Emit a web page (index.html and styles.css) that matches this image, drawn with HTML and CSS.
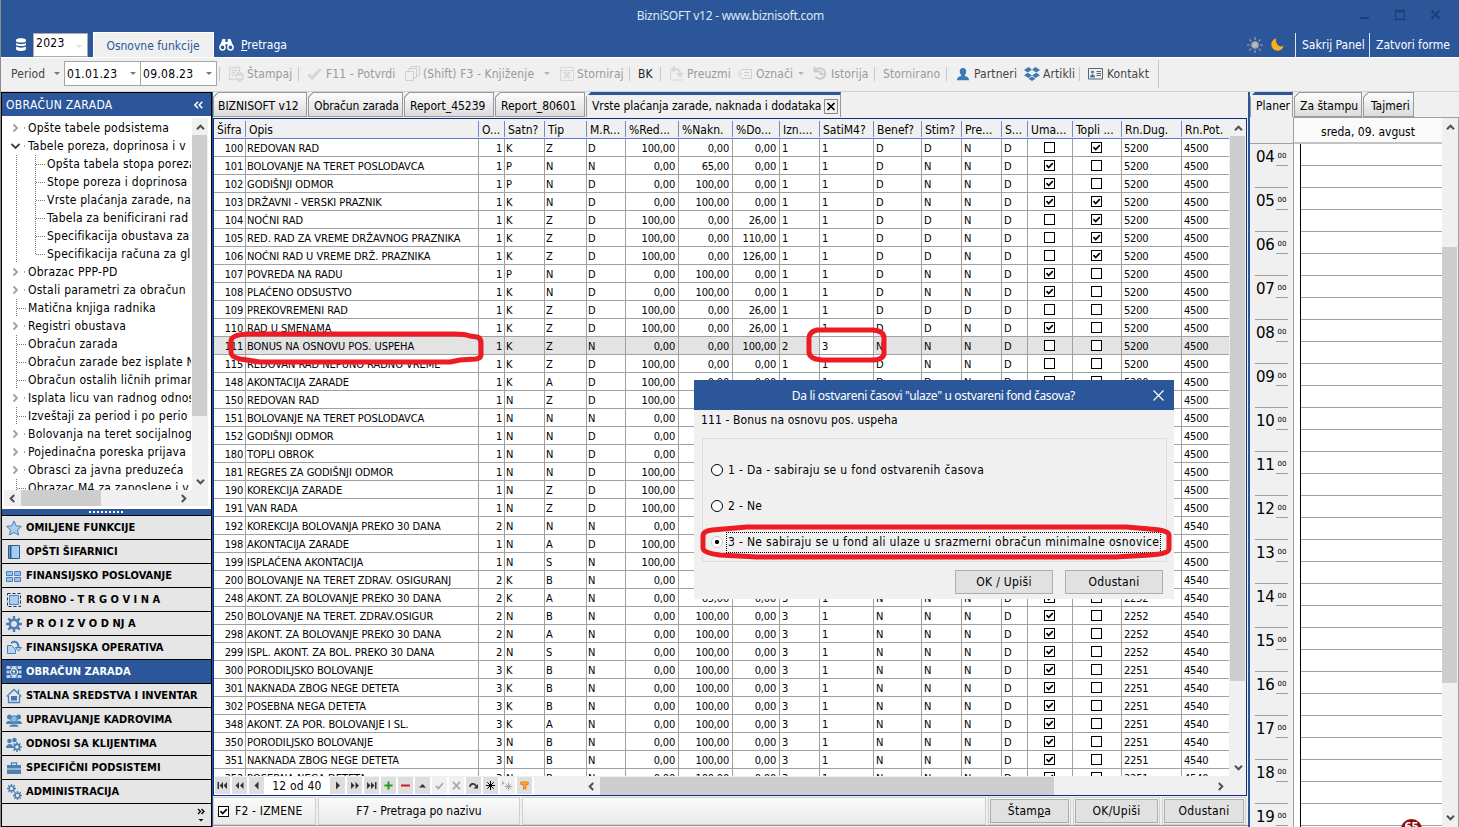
FILE: index.html
```html
<!DOCTYPE html>
<html lang="sr-Latn">
<head>
  <meta charset="UTF-8">
  <title>BizniSOFT v12 - www.biznisoft.com</title>
  <link rel="stylesheet" href="styles.css">
</head>
<body>
  <svg class="defs" width="0" height="0">
    <symbol id="up" viewBox="0 0 9 9"><path d="M1 6.2 4.5 2.7 8 6.2" fill="none" stroke="#505050" stroke-width="2"/></symbol>
    <symbol id="down" viewBox="0 0 9 9"><path d="M1 2.8 4.5 6.3 8 2.8" fill="none" stroke="#505050" stroke-width="2"/></symbol>
    <symbol id="left" viewBox="0 0 9 9"><path d="M6.2 1 2.7 4.5 6.2 8" fill="none" stroke="#505050" stroke-width="2"/></symbol>
    <symbol id="right" viewBox="0 0 9 9"><path d="M2.8 1 6.3 4.5 2.8 8" fill="none" stroke="#505050" stroke-width="2"/></symbol>
    <symbol id="gear" viewBox="0 0 16 16">
      <path d="M8 0v16M0 8h16M2.3 2.3l11.4 11.4M13.7 2.3 2.3 13.7" stroke="#4a80b5" stroke-width="2.4"/>
      <circle cx="8" cy="8" r="4.2" fill="#e6e6e6" stroke="#4a80b5" stroke-width="2.6"/>
    </symbol>
    <symbol id="person" viewBox="0 0 16 16">
      <path d="M8 1c2.500 0 3.800 1.800 3.700 4 0 1.700-.8 2.900-1.500 3.800v1.400c2.500.7 4.600 1.500 4.800 4.800H1c.2-3.300 2.300-4.100 4.800-4.800V8.800C5.100 7.900 4.300 6.700 4.300 5 4.200 2.800 5.500 1 8 1z"/>
    </symbol>
  </svg>

  <header class="titlebar">
    <div class="caption">
      <span class="app-title">BizniSOFT v12 - www.biznisoft.com</span>
      <svg class="win-buttons" width="84" height="12" viewBox="0 0 84 12" fill="none" stroke="#1b3f78">
        <path d="M1 9h9" stroke-width="2"/>
        <path d="M36.500 1.500h9v9h-9zM36 2.500h10" stroke-width="1.300"/>
        <path d="M72.500 1.500l8 8M80.500 1.500l-8 8" stroke-width="2.200"/>
      </svg>
    </div>
    <div class="ribbon">
      <svg class="db" width="12" height="13" viewBox="0 0 12 13" fill="#fff">
        <path d="M1 2c0-2.500 10-2.500 10 0v1c0 2-10 2-10 0z"/>
        <path d="M1 5c2 1.500 8 1.500 10 0v1.500c0 2-10 2-10 0z"/>
        <path d="M1 8.500c2 1.500 8 1.500 10 0V11c0 2.500-10 2.500-10 0z"/>
      </svg>
      <div class="year"><span>2023</span><i class="caret light"></i></div>
      <div class="ribbon-tab">Osnovne funkcije</div>
      <div class="search">
        <svg width="15" height="13" viewBox="0 0 15 13">
          <path d="M3.500 1h2.800v3h2.400V1h2.800L14.500 9H9V6.500H6V9H.5z" fill="#fff"/>
          <circle cx="3.500" cy="9.300" r="2.600" fill="#2b579a" stroke="#fff" stroke-width="1.500"/>
          <circle cx="11.500" cy="9.300" r="2.600" fill="#2b579a" stroke="#fff" stroke-width="1.500"/>
        </svg>
        <span><u>P</u>retraga</span>
      </div>
      <svg class="sun" width="16" height="16" viewBox="0 0 16 16" stroke="#a3a5a8" stroke-width="1.200">
        <path d="M8 0v3M8 13v3M0 8h3M13 8h3M2.300 2.300l2 2M11.700 11.700l2 2M13.700 2.300l-2 2M4.300 11.700l-2 2"/>
        <circle cx="8" cy="8" r="3.200" fill="#b9b9b9"/>
      </svg>
      <svg class="moon" width="13" height="13" viewBox="0 0 13 13"><path d="M5.200.5A6.200 6.200 0 1 0 12.600 7.600C9.500 10.200 3.800 6.500 5.200.5z" fill="#fcae1a"/></svg>
      <div class="link hide-panel">Sakrij Panel</div>
      <div class="link close-forms">Zatvori forme</div>
    </div>
  </header>

  <div class="toolbar">
    <span class="dark">Period</span>
    <i class="caret"></i>
    <div class="date"><span>01.01.23</span><i class="caret"></i></div>
    <div class="date"><span>09.08.23</span><i class="caret"></i></div>
    <i class="sep"></i>
    <svg width="16" height="16" viewBox="0 0 16 16" fill="none" stroke="#d6d6d6" stroke-width="1.300"><path d="M7 13.500H1.500v-12h10V6M3.500 4.500h6M3.500 7h4M3.500 9.500h3M8 9h7v4H8zM10 13v2h3v-2M9.500 9V7h4v2"/></svg>
    <span>Štampaj</span>
    <i class="sep"></i>
    <svg width="15" height="14" viewBox="0 0 15 14" fill="none" stroke="#d6d6d6" stroke-width="3"><path d="M1.500 7.500 5 11l8.500-9"/></svg>
    <span>F11 - Potvrdi</span>
    <svg width="15" height="15" viewBox="0 0 15 15" fill="#f0f0f0" stroke="#d0d0d0"><path d="M5.500.5h9v9h-9z"/><path d="M3.500 2.500h8v9h-8z"/><path d="M.5 5.500h8v9h-8z"/></svg>
    <span>(Shift) F3 - Knjiženje</span>
    <i class="caret pale"></i>
    <svg width="14" height="14" viewBox="0 0 14 14" fill="none" stroke="#d8d8d8"><path d="M.5.500h13v13H.5zM.5 3.500h13"/><path d="M4 5l6 6M10 5l-6 6" stroke-width="2"/></svg>
    <span>Storniraj</span>
    <i class="sep"></i>
    <span class="black">BK</span>
    <i class="sep"></i>
    <svg width="15" height="15" viewBox="0 0 15 15" fill="none" stroke="#d8d8d8"><path d="M1.500 4v10H14"/><path d="M3 3h4q4 0 4 5" stroke-width="2"/><path d="M7.500 7.500h7L11 11.500z" fill="#d8d8d8"/><path d="M5.500 0v6L1.500 3z" fill="#d8d8d8"/></svg>
    <span>Preuzmi</span>
    <svg width="16" height="12" viewBox="0 0 16 12" fill="none" stroke="#cfcfcf"><path d="M4.500 1.500h10v9h-10L.8 6z"/><path d="M7 4.500h5M7 7.500h5"/><circle cx="4" cy="6" r=".6"/></svg>
    <span>Označi</span>
    <i class="caret pale"></i>
    <svg width="14" height="13" viewBox="0 0 14 13" fill="none" stroke="#cacaca" stroke-width="2"><path d="M2.500 3.500a5.300 5.300 0 1 1 0 6M1.500 0v4.500H6M7.500 3.500v3.500h3"/></svg>
    <span>Istorija</span>
    <i class="sep"></i>
    <span>Stornirano</span>
    <i class="sep"></i>
    <svg width="14" height="14" viewBox="0 0 16 16" fill="#3d79b5"><use href="#person"/></svg>
    <span class="dark">Partneri</span>
    <svg width="16" height="14" viewBox="0 0 16 14" fill="#3d79b5"><path d="M4.500 0 8 2.700 3.700 5.500 0 3zM11.500 0 16 3l-3.700 2.500L8 2.700zM3.700 5.700 8 8.500 4.500 11 0 8.300zM12.300 5.700 16 8.300 11.500 11 8 8.500zM4.500 11.800 8 9.400l3.500 2.400L8 14z"/></svg>
    <span class="dark">Artikli</span>
    <i class="sep"></i>
    <svg width="15" height="12" viewBox="0 0 15 12" fill="none" stroke="#5f6367"><path d="M.5.500h14v10.500H.5z"/><path d="M2.500 9c0-3 4-3 4 0z" fill="#3d79b5" stroke="#3d79b5"/><circle cx="4.500" cy="4" r="1" fill="#3d79b5" stroke="#3d79b5"/><path d="M8.500 3.500H13M8.500 5.500H13M8.500 7.500H13"/></svg>
    <span class="dark">Kontakt</span>
    <i class="sep tall"></i>
  </div>

  <main class="workspace">
    <aside class="sidebar">
      <div class="side-head"><span>OBRAČUN ZARADA</span>
        <svg width="9" height="8" viewBox="0 0 9 8" fill="none" stroke="#fff" stroke-width="1.500"><path d="M4 .7.900 4 4 7.300M8.300.700 5.200 4l3.100 3.300"/></svg>
      </div>
      <div class="tree-area">
        <ul class="tree">
          <li class="parent">Opšte tabele podsistema</li>
          <li class="parent open">Tabele poreza, doprinosa i v</li>
          <li class="child">Opšta tabela stopa poreza</li>
          <li class="child">Stope poreza i doprinosa</li>
          <li class="child">Vrste plaćanja zarade, na</li>
          <li class="child">Tabela za benificirani rad</li>
          <li class="child">Specifikacija obustava za</li>
          <li class="child last">Specifikacija računa za gl</li>
          <li class="parent">Obrazac PPP-PD</li>
          <li class="parent">Ostali parametri za obračun</li>
          <li class="leaf">Matična knjiga radnika</li>
          <li class="parent">Registri obustava</li>
          <li class="leaf">Obračun zarada</li>
          <li class="leaf">Obračun zarade bez isplate N</li>
          <li class="leaf">Obračun ostalih ličnih primar</li>
          <li class="parent">Isplata licu van radnog odnos</li>
          <li class="leaf">Izveštaji za period i po perio</li>
          <li class="parent">Bolovanja na teret socijalnog</li>
          <li class="parent">Pojedinačna poreska prijava</li>
          <li class="parent">Obrasci za javna preduzeća</li>
          <li class="leaf">Obrazac M4 za zaposlene i v</li>
        </ul>
        <div class="vscroll tree-v">
          <svg width="9" height="9"><use href="#up"/></svg>
          <i class="thumb"></i>
          <svg width="9" height="9"><use href="#down"/></svg>
        </div>
      </div>
      <div class="hscroll tree-h">
        <svg width="9" height="9"><use href="#left"/></svg>
        <i class="thumb"></i>
        <svg width="9" height="9"><use href="#right"/></svg>
      </div>
      <div class="splitter"><i></i></div>
      <nav class="modules">
        <a><svg width="16" height="16" viewBox="0 0 16 16"><path d="M8 1l2.200 4.800 5.100.6-3.800 3.500 1.100 5.100L8 12.500 3.400 15l1.100-5.100L.7 6.400l5.100-.6z" fill="#a9cdee" stroke="#4a80b5"/></svg>OMILJENE FUNKCIJE</a>
        <a><svg width="16" height="16" viewBox="0 0 16 16"><path d="M2.500 1.500h11v13h-11z" fill="#a9cdf2" stroke="#2f5d8f"/><path d="M4.500 1.500v13" stroke="#2f5d8f" stroke-width="2"/></svg>OPŠTI ŠIFARNICI</a>
        <a><svg width="16" height="16" viewBox="0 0 16 16" fill="#9cc3ec" stroke="#4a80b5"><path d="M.5 3.500h6v4h-6zM8.500 3.500h6v4h-6zM.5 9.500h6v4h-6zM8.500 9.500h6v4h-6z"/></svg>FINANSIJSKO POSLOVANJE</a>
        <a><svg width="16" height="16" viewBox="0 0 16 16"><path d="M3.500 3.500h9v9h-9z" fill="#a9cdf2" stroke="#4a80d0"/><path d="M1.500 1.500h13v13h-13z" fill="none" stroke="#1d2f48" stroke-dasharray="3 2"/></svg>ROBNO - T R G O V I N A</a>
        <a><svg width="16" height="16"><use href="#gear"/></svg>P R O I Z V O D NJ A</a>
        <a><svg width="16" height="16" viewBox="0 0 16 16"><path d="M1.500 5.500h4l4 4v4h-8z" fill="#b6d5f3" stroke="#4a80b5"/><path d="M5 3c5-3 7.500 0 7.500 5" fill="none" stroke="#4a80b5" stroke-width="2"/><path d="M9.500 7.500h6L12.500 11z" fill="#b6d5f3" stroke="#4a80b5"/></svg>FINANSIJSKA OPERATIVA</a>
        <a class="active"><svg width="16" height="16" viewBox="0 0 16 16"><path d="M.5 2h15v3H.5zM.5 6.500h3v3h-3zM12.500 6.500h3v3h-3zM.5 11h15v3H.5z" fill="#b9d3ee"/><path d="M5 2v3M11 2v3M5 11v3M11 11v3" stroke="#2b579a"/><circle cx="8" cy="8" r="3.500" fill="#3a6cab" stroke="#fff"/><path d="M8 6v4M6.500 7.500H9" stroke="#fff"/></svg>OBRAČUN ZARADA</a>
        <a><svg width="16" height="16" viewBox="0 0 16 16"><path d="M2.500 8v6.500h11V8M.7 8.500 8 1.500l7.300 7M12.500 5V1.500" fill="none" stroke="#4a80b5" stroke-width="1.300"/><path d="M5 8h6v4.500H5z" fill="#3d79b5"/></svg>STALNA SREDSTVA I INVENTAR</a>
        <a><svg width="16" height="16" viewBox="0 0 16 16" fill="#4a80b5"><circle cx="3.500" cy="5" r="2.500"/><circle cx="12.500" cy="5" r="2.500"/><path d="M0 12c0-4 5-4 5-2h6c0-2 5-2 5 2z"/><circle cx="8" cy="7" r="3.300" fill="#8fb8e0" stroke="#4a80b5"/><path d="M3 15c0-4 10-4 10 0z" stroke="#e6e6e6" stroke-width=".5"/></svg>UPRAVLJANJE KADROVIMA</a>
        <a><svg width="16" height="16" viewBox="0 0 16 16" fill="#4a80b5"><circle cx="3.500" cy="5" r="2.300"/><circle cx="8.500" cy="4" r="2.300"/><path d="M0 12c0-5 7-5 7-1v1z"/><svg x="6" y="6" width="10" height="10"><use href="#gear"/></svg></svg>ODNOSI SA KLIJENTIMA</a>
        <a><svg width="16" height="16" viewBox="0 0 16 16"><path d="M1 5h14v3.500H1zM1 9.500h14V14H1z" fill="#4a80b5"/><path d="M5.500 5V2.800h5V5" fill="none" stroke="#4a80b5" stroke-width="1.300"/></svg>SPECIFIČNI PODSISTEMI</a>
        <a><svg width="16" height="16" viewBox="0 0 16 16"><svg x="1" y="0" width="9" height="9"><use href="#gear"/></svg><svg x="7" y="7" width="9" height="9"><use href="#gear"/></svg></svg>ADMINISTRACIJA</a>
      </nav>
      <div class="side-foot">
        <svg width="8" height="16" viewBox="0 0 8 16" fill="none" stroke="#000" stroke-width="1.300"><path d="M1 1l2.500 2.500L1 6M4.500 1 7 3.500 4.500 6"/><path d="M1.500 11h5L4 13.500z" fill="#000" stroke="none"/></svg>
      </div>
    </aside>

    <section class="center">
      <div class="tabs">
        <div class="tab t1">BIZNISOFT v12</div>
        <div class="tab t2">Obračun zarada</div>
        <div class="tab t3">Report_45239</div>
        <div class="tab t4">Report_80601</div>
        <div class="tab t5 current">Vrste plaćanja zarade, naknada i dodataka
          <svg width="14" height="15" viewBox="0 0 14 15" fill="none"><path d="M.5.500h13v14H.5z" stroke="#888"/><path d="M3.500 4l7 7M10.500 4l-7 7" stroke="#000" stroke-width="1.700"/></svg>
        </div>
      </div>
      <div class="grid-frame">
        <div class="grid-body">
          <div class="grid-view">
            <div class="row head">
              <span>Šifra</span><span>Opis</span><span>O...</span><span>Satn?</span><span>Tip</span><span>M.R...</span><span>%Red...</span><span>%Nakn.</span><span>%Do...</span><span>Izn....</span><span>SatiM4?</span><span>Benef?</span><span>Stim?</span><span>Pre...</span><span>S...</span><span>Uma...</span><span>Topli ...</span><span>Rn.Dug.</span><span>Rn.Pot.</span>
            </div>
            <div id="rows"></div>
          </div>
          <div class="vscroll grid-v">
            <svg width="9" height="9"><use href="#up"/></svg>
            <i class="thumb"></i>
            <svg width="9" height="9"><use href="#down"/></svg>
          </div>
        </div>
        <div class="grid-nav">
          <b><svg width="11" height="9" viewBox="0 0 11 9"><path d="M.5 1H2v7H.5zM6 1v7L2.500 4.500zM10 1v7L6.500 4.500z"/></svg></b>
          <b><svg width="11" height="9" viewBox="0 0 11 9"><path d="M5 1v7L1.500 4.500zM9.500 1v7L6 4.500z"/></svg></b>
          <b><svg width="11" height="9" viewBox="0 0 11 9"><path d="M7.500.500v8l-4-4z"/></svg></b>
          <span>12 od 40</span>
          <b><svg width="11" height="9" viewBox="0 0 11 9"><path d="M4 .5v8l4-4z"/></svg></b>
          <b><svg width="11" height="9" viewBox="0 0 11 9"><path d="M2 1v7l3.500-3.500zM6.500 1v7L10 4.500z"/></svg></b>
          <b><svg width="11" height="9" viewBox="0 0 11 9"><path d="M1 1v7l3.500-3.500zM5 1v7l3.500-3.500zM9 1h1.500v7H9z"/></svg></b>
          <b><svg width="9" height="9" viewBox="0 0 9 9"><path d="M4.500.500v8M.5 4.500h8" stroke="#1fa01f" stroke-width="2"/></svg></b>
          <b><svg width="9" height="9" viewBox="0 0 9 9"><path d="M0 4.500h9" stroke="#d01c1c" stroke-width="2"/></svg></b>
          <b><svg width="9" height="9" viewBox="0 0 9 9"><path d="M1 6.500h7L4.500 3z"/></svg></b>
          <b class="off"><svg width="9" height="9" viewBox="0 0 9 9"><path d="M1 5l2.500 2.500L8 2" fill="none" stroke="#aaa" stroke-width="1.800"/></svg></b>
          <b class="off"><svg width="9" height="9" viewBox="0 0 9 9"><path d="M1 .8l7 7.500M8 .8 1 8.300" stroke="#aaa" stroke-width="1.800"/></svg></b>
          <b><svg width="9" height="9" viewBox="0 0 9 9"><path d="M1 6c0-4 5-4 6-1" fill="none" stroke="#333" stroke-width="1.600"/><path d="M9 3v4.500H4.500z"/></svg></b>
          <b><svg width="9" height="9" viewBox="0 0 9 9"><path d="M4.500 0v9M0 4.500h9M1.300 1.300l6.400 6.400M7.700 1.300 1.300 7.700" stroke="#000"/></svg></b>
          <b class="off"><svg width="11" height="10" viewBox="0 0 11 10"><path d="M0 0v4l2.500-2z" fill="#aaa"/><path d="M6.500 1.500v8M2.500 5.500h8M3.700 2.700l5.600 5.600M9.300 2.700 3.700 8.300" stroke="#aaa"/></svg></b>
          <b><svg width="9" height="9" viewBox="0 0 9 9"><path d="M.8 1h7.400v2.500H6V8H3.500V3.500H.8z" fill="#ffa53a" stroke="#ef7d0b"/></svg></b>
          <div class="hscroll grid-h">
            <svg width="9" height="9"><use href="#left"/></svg>
            <i class="thumb"></i>
            <svg width="9" height="9"><use href="#right"/></svg>
          </div>
        </div>
      </div>
      <footer class="form-bar">
        <div class="cell c1"><i class="check on"></i>F2 - IZMENE</div>
        <div class="cell c2">F7 - Pretraga po nazivu</div>
        <div class="cell c3"></div>
        <div class="cell btn c4"><button>Štam<u>p</u>a</button></div>
        <div class="cell btn c5"><button>OK/Upiši</button></div>
        <div class="cell btn c6"><button>Odustani</button></div>
      </footer>
    </section>

    <aside class="planner">
      <div class="tabs">
        <div class="tab p1 current">Planer</div>
        <div class="tab p2">Za štampu</div>
        <div class="tab p3">Tajmeri</div>
      </div>
      <div class="day">
        <div class="hours" id="hours"></div>
        <div class="slots">
          <div class="day-name">sreda, 09. avgust</div>
          <div class="lines"></div>
        </div>
        <div class="vscroll day-v">
          <svg width="9" height="9"><use href="#up"/></svg>
          <i class="thumb"></i>
          <svg width="9" height="9"><use href="#down"/></svg>
        </div>
      </div>
      <div class="badge">65</div>
    </aside>
  </main>

  <div class="dialog">
    <div class="dialog-title"><span>Da li ostvareni časovi "ulaze" u ostvareni fond časova?</span>
      <svg width="11" height="11" viewBox="0 0 11 11"><path d="M.5.500l10 10M10.500.500l-10 10" stroke="#fff" stroke-width="1.100"/></svg>
    </div>
    <p>111 - Bonus na osnovu pos. uspeha</p>
    <div class="options">
      <label><i class="radio"></i><span>1 - Da - sabiraju se u fond ostvarenih časova</span></label>
      <label><i class="radio"></i><span>2 - Ne</span></label>
      <label class="picked"><i class="radio"></i><span>3 - Ne sabiraju se u fond ali ulaze u srazmerni obračun minimalne osnovice</span></label>
    </div>
    <div class="actions"><button>OK / Upiši</button><button>Odustani</button></div>
  </div>

  <!-- hand drawn highlights -->
  <svg class="marks" width="1459" height="827" fill="none" stroke="#ed1c24" stroke-width="5" stroke-linejoin="round">
    <path d="M247 334H455Q465 334 470 336L477 337Q481 338 481 343V355Q481 358 476 359L460 360 450 362H260L240 359Q231 357 231 352V341Q231 335 247 334z"/>
    <path d="M817 330H873Q884 331 884 338V353Q884 359 874 360H822Q809 359 809 352V338Q809 332 817 330z"/>
    <path d="M747 527H1126L1150 529Q1169 530 1169 535V549Q1169 554 1150 555L1115 557H757L720 555Q703 553 703 548V536Q703 531 712 530z"/>
  </svg>

  <script src="app.js"></script>
</body>
</html>
```
FILE: app.js
```js
// sifra|opis|o|satn|tip|mr|red|nakn|do|izn|sati|benef|stim|pre|s|uma|topli|dug|pot
const data = `100|REDOVAN RAD|1|K|Z|D|100,00|0,00|0,00|1|1|D|D|N|D|0|1|5200|4500
101|BOLOVANJE NA TERET POSLODAVCA|1|P|N|N|0,00|65,00|0,00|1|1|D|N|N|D|1|0|5200|4500
102|GODIŠNJI ODMOR|1|P|N|D|0,00|100,00|0,00|1|1|D|N|N|D|1|0|5200|4500
103|DRŽAVNI - VERSKI PRAZNIK|1|K|N|D|0,00|100,00|0,00|1|1|D|N|N|D|1|1|5200|4500
104|NOĆNI RAD|1|K|Z|D|100,00|0,00|26,00|1|1|D|D|N|D|0|1|5200|4500
105|RED. RAD ZA VREME DRŽAVNOG PRAZNIKA|1|K|Z|D|100,00|0,00|110,00|1|1|D|D|N|D|0|1|5200|4500
106|NOĆNI RAD U VREME DRŽ. PRAZNIKA|1|K|Z|D|100,00|0,00|126,00|1|1|D|D|N|D|0|1|5200|4500
107|POVREDA NA RADU|1|P|N|D|0,00|100,00|0,00|1|1|D|N|N|D|1|0|5200|4500
108|PLAĆENO ODSUSTVO|1|K|N|D|0,00|100,00|0,00|1|1|D|N|N|D|1|0|5200|4500
109|PREKOVREMENI RAD|1|K|Z|D|100,00|0,00|26,00|1|1|D|D|D|D|0|0|5200|4500
110|RAD U SMENAMA|1|K|Z|D|100,00|0,00|26,00|1|1|D|D|N|D|1|0|5200|4500
111|BONUS NA OSNOVU POS. USPEHA|1|K|Z|N|0,00|0,00|100,00|2|3|N|N|N|D|0|0|5200|4500
115|REDOVAN RAD NEPUNO RADNO VREME|1|K|Z|D|100,00|0,00|0,00|1|1|D|N|N|D|0|0|5200|4500
148|AKONTACIJA ZARADE|1|K|A|D|100,00|0,00|0,00|1|1|D|D|N|D|0|0|5200|4500
150|REDOVAN RAD|1|N|Z|D|100,00|0,00|0,00|1|1|D|D|N|D|0|0|5200|4500
151|BOLOVANJE NA TERET POSLODAVCA|1|N|N|N|0,00|65,00|0,00|1|1|D|N|N|D|1|0|5200|4500
152|GODIŠNJI ODMOR|1|N|N|D|0,00|100,00|0,00|1|1|D|N|N|D|1|0|5200|4500
180|TOPLI OBROK|1|N|N|D|0,00|0,00|0,00|1|1|D|N|N|D|0|0|5200|4500
181|REGRES ZA GODIŠNJI ODMOR|1|N|N|D|100,00|0,00|0,00|1|1|D|N|N|D|0|0|5200|4500
190|KOREKCIJA ZARADE|1|N|Z|D|100,00|0,00|0,00|1|1|D|N|N|D|0|0|5200|4500
191|VAN RADA|1|N|Z|D|100,00|0,00|0,00|1|1|D|N|N|D|0|0|5200|4500
192|KOREKCIJA BOLOVANJA PREKO 30 DANA|2|N|N|N|0,00|65,00|0,00|3|1|N|N|N|D|1|0|2252|4540
198|AKONTACIJA ZARADE|1|N|A|D|100,00|0,00|0,00|1|1|D|N|N|D|0|0|5200|4500
199|ISPLAĆENA AKONTACIJA|1|N|S|N|100,00|0,00|0,00|1|1|D|N|N|D|0|0|5200|4500
200|BOLOVANJE NA TERET ZDRAV. OSIGURANJ|2|K|B|N|0,00|65,00|0,00|3|1|N|N|N|D|1|0|2252|4540
248|AKONT. ZA BOLOVANJE PREKO 30 DANA|2|K|A|N|0,00|65,00|0,00|3|1|N|N|N|D|1|0|2252|4540
250|BOLOVANJE NA TERET. ZDRAV.OSIGUR|2|N|B|N|0,00|100,00|0,00|3|1|N|N|N|D|1|0|2252|4540
298|AKONT. ZA BOLOVANJE PREKO 30 DANA|2|N|A|N|0,00|100,00|0,00|3|1|N|N|N|D|1|0|2252|4540
299|ISPL. AKONT. ZA BOL. PREKO 30 DANA|2|N|S|N|0,00|100,00|0,00|3|1|N|N|N|D|1|0|2252|4540
300|PORODILJSKO BOLOVANJE|3|K|B|N|0,00|100,00|0,00|3|1|N|N|N|D|1|0|2251|4540
301|NAKNADA ZBOG NEGE DETETA|3|K|B|N|0,00|100,00|0,00|3|1|N|N|N|D|1|0|2251|4540
302|POSEBNA NEGA DETETA|3|K|B|N|0,00|100,00|0,00|3|1|N|N|N|D|1|0|2251|4540
348|AKONT. ZA POR. BOLOVANJE I SL.|3|K|A|N|0,00|100,00|0,00|3|1|N|N|N|D|1|0|2251|4540
350|PORODILJSKO BOLOVANJE|3|N|B|N|0,00|100,00|0,00|3|1|N|N|N|D|1|0|2251|4540
351|NAKNADA ZBOG NEGE DETETA|3|N|B|N|0,00|100,00|0,00|3|1|N|N|N|D|1|0|2251|4540
352|POSEBNA NEGA DETETA|3|N|B|N|0,00|100,00|0,00|3|1|N|N|N|D|1|0|2251|4540`;

const numeric = [0, 2, 6, 7, 8];
const boxes = [15, 16];

document.getElementById('rows').innerHTML = data.split('\n').map(line => {
  const cells = line.split('|');
  const html = cells.map((value, i) => {
    if (boxes.includes(i)) {
      return `<span class="box"><i class="check ${value === '1' ? 'on' : ''}"></i></span>`;
    }
    const edit = cells[0] === '111' && i === 10 ? 'edit' : '';
    return `<span class="${numeric.includes(i) ? 'num' : ''} ${edit}">${value}</span>`;
  }).join('');
  return `<div class="row ${cells[0] === '111' ? 'selected' : ''}">${html}</div>`;
}).join('');

let hours = '';
for (let h = 4; h <= 19; h++) {
  hours += `<div class="hour"><span>${String(h).padStart(2, '0')}</span><small>00</small></div>`;
}
document.getElementById('hours').innerHTML = hours;
```
FILE: styles.css
```css
* {
  box-sizing: border-box;
}
body {
  margin: 0;
  width: 1459px;
  height: 827px;
  overflow: hidden;
  position: relative;
  display: flex;
  flex-direction: column;
  background: #f0f0f0;
  border-left: 1px solid #8c8c8c;
  font-family: "DejaVu Sans Condensed", "DejaVu Sans", sans-serif;
  font-stretch: condensed;
  font-size: 12px;
  color: #000;
  white-space: nowrap;
}
svg {
  display: block;
  flex: none;
}
.defs {
  position: absolute;
}
button {
  font: inherit;
  color: inherit;
  letter-spacing: 0.3px;
  padding: 0;
  background: #e1e1e1;
  border: 1px solid #adadad;
}
.caret {
  border: 3px solid transparent;
  border-top: 3px solid #777;
  border-bottom: 0;
}
.caret.light {
  border-top-color: #ddd;
}
.caret.pale {
  border-top-color: #b5b5b5;
}

/* title bar */
.titlebar {
  height: 57px;
  background: #2b579a;
  color: #fff;
}
.caption {
  height: 32px;
  display: flex;
  align-items: center;
  justify-content: flex-end;
  padding: 0 16px 2px 0;
}
.app-title {
  margin-right: 535px;
  font-family: "Noto Sans", sans-serif;
  font-size: 12px;
  letter-spacing: -0.25px;
  color: #dfe7f3;
}
.ribbon {
  height: 25px;
  display: grid;
  grid-template-columns: 18px 60px 126px 1028px 24px 24px 74px 1fr;
  padding-left: 14px;
  align-items: center;
}
.year {
  height: 24px;
  width: 55px;
  background: #fff;
  border: 1px solid #aaa;
  color: #000;
  display: flex;
  justify-content: space-between;
  padding: 2px 5px 0 2px;
  letter-spacing: 0.3px;
}
.year .caret {
  margin-top: 9px;
}
.ribbon-tab {
  width: 121px;
  height: 25px;
  background: #f0f0f0;
  border: 1px solid #fff;
  border-bottom: 0;
  color: #2b579a;
  text-align: center;
  line-height: 27px;
  padding-right: 1px;
}
.search {
  display: flex;
  gap: 7px;
  align-items: center;
}
.link {
  height: 24px;
  line-height: 25px;
  border-left: 1px solid #dfe6f1;
  padding-left: 6px;
}

/* toolbar */
.toolbar {
  height: 35px;
  border-top: 1px solid #fff;
  border-bottom: 1px solid #d0d0d0;
  display: grid;
  grid-template-columns: 43px 10px 76px 79px 9px 19px 51px 9px 19px 79px 18px 121px 16px 17px 52px 9px 22px 9px 18px 50px 19px 42px 15px 18px 43px 9px 63px 10px 18px 50px 19px 36px 9px 19px 51px 1fr;
  padding: 0 0 2px 10px;
  align-items: center;
  color: #9a9a9a;
  letter-spacing: 0.1px;
}
.toolbar .dark {
  color: #444;
}
.toolbar .black {
  color: #222;
}
.toolbar .caret {
  width: 6px;
}
.date {
  width: 77px;
  height: 25px;
  background: #fff;
  border: 1px solid #a5a5a5;
  color: #000;
  display: flex;
  align-items: center;
  justify-content: space-between;
  padding: 0 4px 0 2px;
}
.date span {
  letter-spacing: 0.3px;
}
.sep {
  width: 1px;
  height: 14px;
  background: #c8c8c8;
}
.sep.tall {
  height: 28px;
}

.workspace {
  height: 735px;
  display: flex;
}

/* scrollbars */
.vscroll, .hscroll {
  display: flex;
  align-items: center;
  background: #f0f0f0;
  flex: none;
}
.vscroll {
  width: 16px;
  flex-direction: column;
}
.thumb {
  background: #cdcdcd;
}
.vscroll .thumb {
  width: 15px;
  align-self: flex-start;
}
.hscroll .thumb {
  height: 100%;
}
.vscroll svg:last-child {
  margin-top: auto;
}
.hscroll svg:last-child {
  margin-left: auto;
}

/* left panel */
.sidebar {
  width: 211px;
  border: 1px solid #000;
  border-width: 1px 1px 0 1px;
  background: #fff;
  display: flex;
  flex-direction: column;
}
.side-head {
  height: 23px;
  background: #2b579a;
  color: #fff;
  display: flex;
  align-items: center;
  justify-content: space-between;
  padding: 0 8px 0 4px;
  letter-spacing: 0.35px;
}
.tree-area {
  height: 374px;
  display: flex;
  padding: 2px 3px 0 2px;
}
.tree {
  flex: 1;
  width: 0;
  overflow: hidden;
  list-style: none;
  margin: 0 1px 0 0;
  padding: 1px 0 0;
  letter-spacing: 0.25px;
}
.tree li {
  height: 18px;
  line-height: 18px;
  padding-left: 24px;
  background: no-repeat;
}
.tree .parent {
  background-image: url("data:image/svg+xml,%3Csvg xmlns='http://www.w3.org/2000/svg' width='24' height='18'%3E%3Cpath d='M9.500 5.500 13 9l-3.500 3.500' fill='none' stroke='%23a0a0a0' stroke-width='1.800'/%3E%3Cpath d='M20 9h1' stroke='%23555'/%3E%3C/svg%3E");
}
.tree .open {
  background-image: url("data:image/svg+xml,%3Csvg xmlns='http://www.w3.org/2000/svg' width='24' height='18'%3E%3Cpath d='M7.500 7 11.500 11l4-4' fill='none' stroke='%23404040' stroke-width='1.800'/%3E%3Cpath d='M20 9h1' stroke='%23555'/%3E%3C/svg%3E");
}
.tree .leaf {
  background-image: url("data:image/svg+xml,%3Csvg xmlns='http://www.w3.org/2000/svg' width='24' height='18'%3E%3Cpath d='M12.500 0v18M13 9.500h9' stroke='%23777' stroke-dasharray='1 1'/%3E%3C/svg%3E");
}
.tree .child {
  padding-left: 43px;
  background-image: url("data:image/svg+xml,%3Csvg xmlns='http://www.w3.org/2000/svg' width='43' height='18'%3E%3Cpath d='M12.500 0v18M31.500 0v18M32 9.500h9' stroke='%23777' stroke-dasharray='1 1'/%3E%3C/svg%3E");
}
.tree .last {
  background-image: url("data:image/svg+xml,%3Csvg xmlns='http://www.w3.org/2000/svg' width='43' height='18'%3E%3Cpath d='M12.500 0v18M31.500 0v10M32 9.500h9' stroke='%23777' stroke-dasharray='1 1'/%3E%3C/svg%3E");
}
.tree-v {
  padding: 5px 0 4px;
}
.tree-v .thumb {
  height: 281px;
  margin-top: 3px;
}
.tree-h {
  height: 16px;
  margin: 0 3px 0 2px;
  padding: 0 20px 0 4px;
}
.tree-h .thumb {
  width: 80px;
  margin-left: 4px;
}
.splitter {
  height: 7px;
  margin-top: 3px;
  background: #2b579a;
  border-bottom: 1px solid #000;
  display: flex;
  justify-content: center;
}
.splitter i {
  width: 35px;
  height: 2px;
  margin-top: 2px;
  background: repeating-linear-gradient(90deg, #fff 0 2px, transparent 2px 4px);
}
.modules a {
  height: 24px;
  display: flex;
  align-items: center;
  gap: 4px;
  padding-left: 4px;
  background: #e6e6e6;
  border-bottom: 1px solid #000;
  font-weight: bold;
  font-size: 11px;
  letter-spacing: 0.03px;
}
.modules .active {
  background: #2b579a;
  color: #fff;
}
.side-foot {
  flex: 1;
  background: #e6e6e6;
  border-bottom: 1px solid #000;
  display: flex;
  justify-content: flex-end;
  padding: 4px 6px 0 0;
}

/* tabs */
.tabs {
  display: flex;
  gap: 1px;
  height: 25px;
}
.tab {
  height: 25px;
  border: 1px solid #999;
  padding: 0 0 0 4px;
  line-height: 27px;
  background: linear-gradient(135deg, #999 4.4px, transparent 4.5px) border-box, linear-gradient(#fcfcfc, #dcdcdc);
  clip-path: polygon(5px 0, 100% 0, 100% 100%, 0 100%, 0 5px);
}
.tab.current {
  border-top: 3px solid #2b579a;
  border-bottom: 0;
  line-height: 23px;
  background: #f0f0f0;
}
.center {
  width: 1036px;
  border-left: 1px solid #2b579a;
  background: #f0f0f0;
  display: flex;
  flex-direction: column;
}
.center .tabs {
  height: 26px;
}
.t1 {
  width: 94px;
}
.t2 {
  width: 95px;
  padding-left: 5px;
  letter-spacing: -0.1px;
}
.t3 {
  width: 90px;
  padding-left: 5px;
}
.t4 {
  width: 90px;
  padding-left: 5px;
}
.t5 {
  width: 255px;
  display: flex;
  align-items: center;
  justify-content: space-between;
  padding: 0 2px 0 5px;
  letter-spacing: -0.05px;
}

/* grid */
.grid-frame {
  height: 678px;
  border: 1px solid #0a2f86;
  background: #f0f0f0;
  margin-right: 1px;
}
.grid-body {
  height: 658px;
  display: flex;
}
.grid-view {
  width: 1015px;
  overflow: hidden;
  background: #fff;
  height: 657px;
}
.row {
  display: grid;
  width: 1015px;
  grid-template-columns: 32px 233px 26px 40px 42px 39px 53px 54px 47px 40px 54px 48px 40px 40px 26px 45px 49px 60px 47px;
  height: 18px;
  font-size: 11px;
  letter-spacing: -0.2px;
}
.row span {
  border-right: 1px solid #a0a0a0;
  border-bottom: 1px solid #a0a0a0;
  padding: 0 3px 0 1px;
  line-height: 19px;
  overflow: hidden;
}
.row span:nth-child(2) {
  letter-spacing: -0.04px;
}
.row span:nth-child(n+10) {
  padding-left: 2px;
}
.row span:last-child {
  border-right: 0;
}
.row .num {
  text-align: right;
}
.row .num:nth-child(-n+3) {
  padding-right: 2px;
}
.row .box {
  display: flex;
  align-items: center;
  justify-content: center;
}
.row.selected {
  background: #e3e3e3;
}
.row .edit {
  background: #fff;
}
.row.head {
  height: 20px;
  background: #f0f0f0;
  border-bottom: 1px solid #5c7fc5;
  font-size: 12px;
}
.row.head span {
  height: 16px;
  margin-top: 2px;
  border-bottom: 0;
  border-right-color: #6c8cd0;
  padding: 0 0 0 3px;
  line-height: 18px;
  letter-spacing: 0;
}
.check {
  width: 11px;
  height: 11px;
  border: 1px solid #000;
  background: #fff;
  flex: none;
}
.check.on {
  background: #fff url("data:image/svg+xml,%3Csvg xmlns='http://www.w3.org/2000/svg' width='9' height='9'%3E%3Cpath d='M1.500 4.200 3.700 6.500 7.800 2.200' fill='none' stroke='%23000' stroke-width='1.700'/%3E%3C/svg%3E") center no-repeat;
}
.grid-v {
  margin-left: 1px;
  padding: 5px 0;
}
.grid-v .thumb {
  height: 545px;
  margin-top: 3px;
}
.grid-nav {
  height: 18px;
  display: flex;
  gap: 2px;
  padding-left: 1px;
  background: #fff;
}
.grid-nav b {
  width: 15px;
  height: 17px;
  background: #dedede;
  display: flex;
  align-items: center;
  justify-content: center;
  fill: #333;
}
.grid-nav .off {
  background: #f0f0f0;
}
.grid-nav span {
  width: 62px;
  text-align: center;
  line-height: 18px;
  letter-spacing: 0.2px;
}
.grid-h {
  flex: 1;
  padding: 0 21px 0 53px;
}
.grid-h .thumb {
  width: 454px;
  margin-left: 4px;
}
.form-bar {
  display: flex;
  gap: 2px;
  padding-top: 1px;
  height: 30px;
  border-bottom: 1px solid #999;
}
.cell {
  height: 28px;
  border: 1px solid #cfcfcf;
  background: linear-gradient(#fafafa, #e9e9e9);
  display: flex;
  align-items: center;
  justify-content: center;
}
.c1 {
  width: 103px;
  gap: 6px;
  justify-content: flex-start;
  padding-left: 4px;
  letter-spacing: 0.2px;
}
.c2 {
  width: 202px;
}
.c3 {
  width: 464px;
}
.c4 {
  width: 83px;
}
.c5 {
  width: 87px;
}
.c6 {
  width: 84px;
}
.btn button {
  width: calc(100% - 2px);
  height: 24px;
}

/* planner */
.planner {
  flex: 1;
  border-left: 2px solid #2b579a;
  position: relative;
}
.p1 {
  width: 43px;
  padding-left: 5px;
}
.p2 {
  width: 68px;
  padding-left: 5px;
}
.p3 {
  width: 51px;
  padding-left: 7px;
}
.day {
  height: 710px;
  display: flex;
  border-right: 1px solid #a0a0a0;
}
.hours {
  width: 44px;
  padding-top: 26px;
  border-right: 1px solid #a0a0a0;
  overflow: hidden;
}
.hour {
  height: 44px;
  margin: 0 5px 0 5px;
  border-top: 1px solid #a0a0a0;
  display: flex;
  justify-content: space-between;
  font-family: "DejaVu Sans", sans-serif;
  font-stretch: normal;
  font-size: 15px;
  letter-spacing: -0.4px;
}
.hour:first-child {
  margin: 0;
  padding: 0 5px;
}
.hour span {
  margin: 4px 0 0 1px;
}
.hour small {
  width: 12px;
  height: 22px;
  border-bottom: 1px solid #a0a0a0;
  font-size: 7px;
  letter-spacing: 0;
  line-height: 24px;
  text-align: center;
}
.slots {
  width: 148px;
  border-top: 1px solid #a0a0a0;
  background: #fff;
}
.day-name {
  height: 26px;
  background: #fafafa;
  border-bottom: 2px solid #c4c4c4;
  text-align: center;
  line-height: 28px;
}
.lines {
  height: 690px;
  margin-left: 6px;
  border-left: 1px solid #000;
  background: repeating-linear-gradient(#fff 0 21px, #a0a0a0 21px 22px);
}
.day-v {
  border-top: 1px solid #a0a0a0;
  padding: 5px 0;
}
.day-v .thumb {
  height: 436px;
  margin-top: 115px;
}
.badge {
  position: absolute;
  left: 151px;
  top: 727px;
  width: 21px;
  height: 21px;
  border-radius: 50%;
  background: #8b0d0d;
  color: #fff;
  font-size: 11px;
  font-weight: bold;
  text-align: center;
  line-height: 15px;
}

/* dialog */
.dialog {
  position: absolute;
  left: 693px;
  top: 380px;
  width: 480px;
  height: 219px;
  background: #f0f0f0;
}
.dialog-title {
  height: 30px;
  background: #2b579a;
  color: #fff;
  display: flex;
  align-items: center;
  justify-content: flex-end;
  gap: 78px;
  padding-right: 10px;
  font-family: "Noto Sans", sans-serif;
  letter-spacing: -0.33px;
}
.dialog p {
  margin: 3px 0 0 7px;
  height: 25px;
  letter-spacing: 0.12px;
}
.options {
  margin: 0 7px 0 8px;
  height: 124px;
  border: 1px solid #dcdcdc;
  padding: 13px 0 0 8px;
}
.options label {
  height: 36px;
  display: flex;
  align-items: center;
  gap: 4px;
  letter-spacing: 0.33px;
}
.options label span {
  padding: 0 1px;
  height: 19px;
  line-height: 18px;
}
.picked span {
  outline: 1px dotted #000;
}
.radio {
  width: 12px;
  height: 12px;
  border: 1px solid #000;
  border-radius: 50%;
  background: #fff;
}
.picked .radio {
  border-color: #ccc;
  background: radial-gradient(#000 0 1.8px, #fff 2.5px);
}
.actions {
  display: flex;
  justify-content: flex-end;
  gap: 12px;
  padding: 8px 11px 0 0;
}
.actions button {
  width: 98px;
  height: 24px;
}
.marks {
  position: absolute;
  left: -1px;
  top: 0;
  pointer-events: none;
}
```
